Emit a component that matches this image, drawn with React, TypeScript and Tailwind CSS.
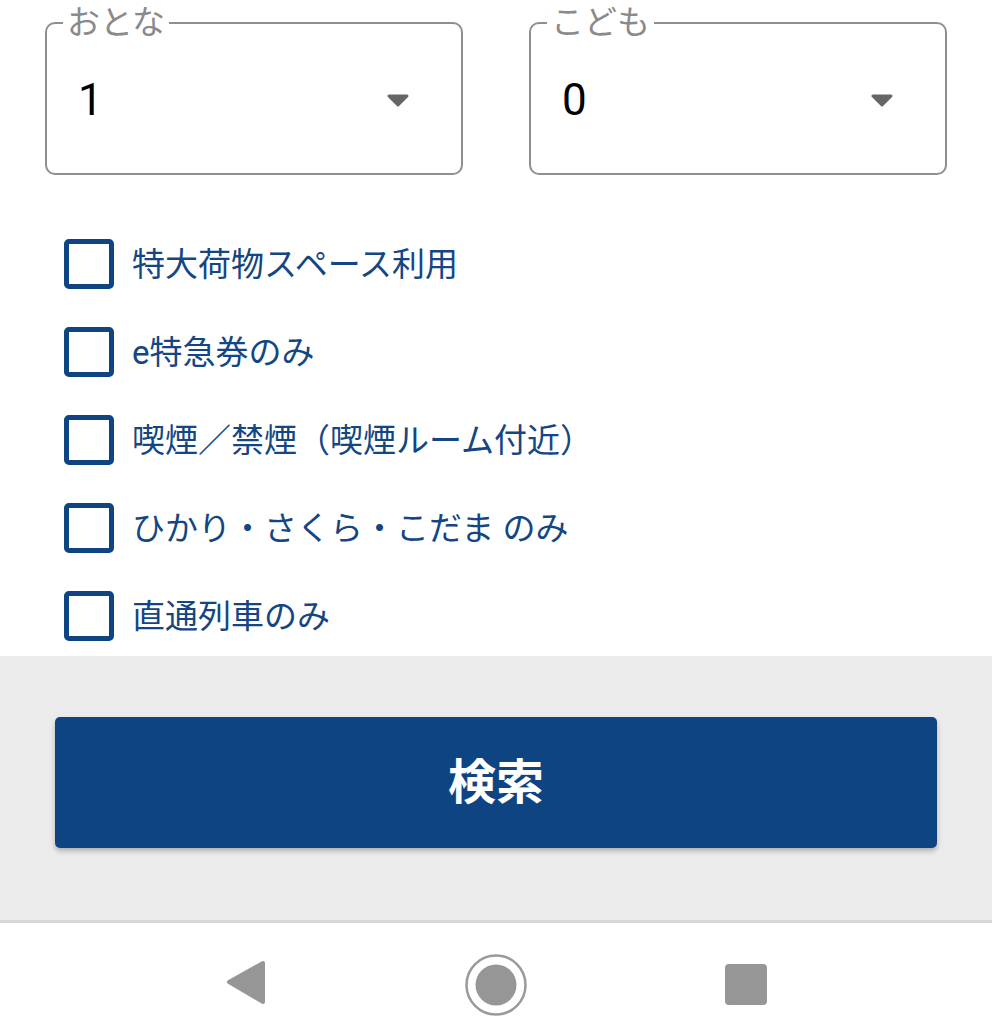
import { useState } from "react";

const FONT = { fontFamily: "Roboto, 'Noto Sans CJK JP', sans-serif" };

const OPTIONS = [
  "特大荷物スペース利用",
  "e特急券のみ",
  "喫煙／禁煙（喫煙ルーム付近）",
  "ひかり・さくら・こだま のみ",
  "直通列車のみ",
];

function CountSelect({ label, value }: { label: string; value: string }) {
  return (
    <fieldset className="border-2 border-[#8f8f8f] rounded-[10px] mt-[6px]">
      <legend className="ml-[16px] px-[4px] text-[33px] leading-none text-[#8a8a8a]">{label}</legend>
      <div className="h-[134px] pb-[12px] flex items-center justify-between pl-[31px] pr-[52px]">
        <span className="text-[44px] text-black">{value}</span>
        <svg width="22" height="13" viewBox="0 0 22 13">
          <path d="M2 2 L20 2 L11 11 Z" fill="#666" stroke="#666" strokeWidth="3" strokeLinejoin="round" />
        </svg>
      </div>
    </fieldset>
  );
}

export default function App() {
  const [checked, setChecked] = useState<boolean[]>(OPTIONS.map(() => false));

  return (
    <div className="w-[992px] bg-white" style={FONT}>
      {/* 人数 */}
      <div className="grid grid-cols-2 gap-[66px] px-[45px]">
        <CountSelect label="おとな" value="1" />
        <CountSelect label="こども" value="0" />
      </div>

      {/* 条件 */}
      <div className="flex flex-col gap-[38px] px-[64px] pt-[64px] pb-[15px]">
        {OPTIONS.map((opt, i) => (
          <label key={opt} className="flex items-center gap-[18px] cursor-pointer">
            <input
              type="checkbox"
              className="sr-only"
              checked={checked[i]}
              onChange={() => setChecked(checked.map((c, j) => (j === i ? !c : c)))}
            />
            <span className="w-[50px] h-[50px] border-[5px] border-[#0f4482] rounded-[5px] flex items-center justify-center">
              {checked[i] && <span className="w-[26px] h-[26px] bg-[#0f4482]" />}
            </span>
            <span className="text-[33px] leading-none text-[#134683]">{opt}</span>
          </label>
        ))}
      </div>

      {/* 検索 */}
      <div className="bg-[#ebebeb] px-[55px] pt-[61px] pb-[72px]">
        <button className="w-full h-[131px] bg-[#0f4482] rounded-[5px] shadow-[0_3px_5px_rgba(0,0,0,0.25)] text-white text-[48px] font-bold">
          検索
        </button>
      </div>

      {/* ナビゲーションバー */}
      <div className="border-t-[3px] border-[#d8d8d8] h-[97px] flex justify-center items-start pt-[30px]">
        <div className="w-[250px] flex justify-center">
          <svg width="42" height="46" viewBox="0 0 42 46" className="mt-[7px]">
            <path d="M4 22 L38 3 L38 42 Z" fill="#969696" stroke="#969696" strokeWidth="4" strokeLinejoin="round" />
          </svg>
        </div>
        <div className="w-[250px] flex justify-center">
          <svg width="64" height="64" viewBox="0 0 64 64">
            <circle cx="32" cy="32" r="29.5" fill="none" stroke="#9a9a9a" strokeWidth="2.5" />
            <circle cx="32" cy="32" r="20.5" fill="#969696" />
          </svg>
        </div>
        <div className="w-[250px] flex justify-center">
          <div className="w-[42px] h-[41px] mt-[11px] rounded-[4px] bg-[#969696]" />
        </div>
      </div>
    </div>
  );
}
